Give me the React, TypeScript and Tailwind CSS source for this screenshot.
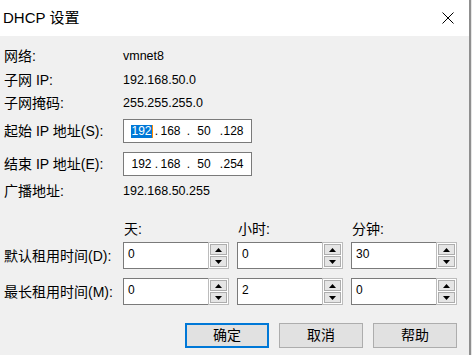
import React from "react";

const CJK = { fontFamily: '"Liberation Sans", "Noto Sans CJK SC", sans-serif' };

function Spinner() {
  return (
    <div className="w-[21px] h-full border border-[#bcbcbc] bg-white p-[1px] flex flex-col gap-[1px]">
      <div className="flex-1 border border-[#adadad] bg-[#e5e5e5] flex items-center justify-center">
        <svg width="7" height="4" viewBox="0 0 7 4"><path d="M3.5 0 L7 4 L0 4 Z" fill="#000" /></svg>
      </div>
      <div className="flex-1 border border-[#adadad] bg-[#e5e5e5] flex items-center justify-center">
        <svg width="7" height="4" viewBox="0 0 7 4"><path d="M0 0 L7 0 L3.5 4 Z" fill="#000" /></svg>
      </div>
    </div>
  );
}

function SpinBox({ value }: { value: string }) {
  return (
    <div className="w-[106px] h-full flex">
      <div className="w-[85px] h-full bg-white border-y border-l border-[#7a7a7a] pl-[4px] pt-[3px] text-[12px] leading-[16px] text-black" style={{ fontFamily: '"Liberation Sans", sans-serif' }}>
        {value}
      </div>
      <Spinner />
    </div>
  );
}

function IpBox({ parts, selected }: { parts: string[]; selected?: boolean }) {
  return (
    <div className="w-[129px] h-[24px] bg-white border border-[#7a7a7a] flex items-center pl-[7px] text-[12px] leading-[13px] text-black" style={{ fontFamily: '"Liberation Sans", sans-serif' }}>
      <span className={"inline-block w-[21px] text-center " + (selected ? "bg-[#0078d7] text-white" : "")}>{parts[0]}</span>
      <span className={"inline-block w-[1px] h-[13px] " + (selected ? "bg-[#ff8c00]" : "")} />
      <span className="inline-block w-[7px] text-center">.</span>
      <span className="inline-block w-[21px] text-center">{parts[1]}</span>
      <span className="inline-block w-[15px] text-center">.</span>
      <span className="inline-block w-[16px] text-center">{parts[2]}</span>
      <span className="inline-block w-[11px] text-right">.</span>
      <span className="inline-block w-[21px] text-center">{parts[3]}</span>
    </div>
  );
}

function InfoRow({ label, value, className }: { label: string; value: string; className: string }) {
  return (
    <div className={"flex items-center h-[20px] " + className}>
      <div className="w-[119px] text-[14px] leading-[20px] whitespace-nowrap" style={CJK}>{label}</div>
      <div className="text-[12.5px] leading-[20px]" style={{ fontFamily: '"Liberation Sans", sans-serif' }}>{value}</div>
    </div>
  );
}

export default function App() {
  return (
    <div className="w-[472px] h-[355px] flex overflow-hidden bg-[#f0f0f0]">
      <div className="w-[469px] h-full flex flex-col text-black">
        <div className="h-[36px] bg-white flex items-center justify-between pl-[3px] pr-[15px]">
          <span className="text-[15px] leading-[20px] mt-[-1px]" style={CJK}>DHCP 设置</span>
          <svg width="12" height="12" viewBox="0 0 12 12" className="mt-[-1px]">
            <path d="M0.5 0.5 L11.5 11.5 M11.5 0.5 L0.5 11.5" stroke="#000" strokeWidth="1" />
          </svg>
        </div>
        <div className="flex-1 bg-[#f0f0f0] flex flex-col pl-[4px]">
          <InfoRow label="网络:" value="vmnet8" className="mt-[10px]" />
          <InfoRow label="子网 IP:" value="192.168.50.0" className="mt-[4px]" />
          <InfoRow label="子网掩码:" value="255.255.255.0" className="mt-[3px]" />
          <div className="flex items-center h-[24px] mt-[6px]">
            <div className="w-[119px] text-[14px] leading-[20px] whitespace-nowrap" style={CJK}>起始 IP 地址(S):</div>
            <IpBox parts={["192", "168", "50", "128"]} selected />
          </div>
          <div className="flex items-center h-[24px] mt-[9px]">
            <div className="w-[119px] text-[14px] leading-[20px] whitespace-nowrap" style={CJK}>结束 IP 地址(E):</div>
            <IpBox parts={["192", "168", "50", "254"]} />
          </div>
          <InfoRow label="广播地址:" value="192.168.50.255" className="mt-[5px]" />

          <div className="flex items-center h-[20px] mt-[18px] text-[14px] leading-[20px]" style={CJK}>
            <div className="w-[119px]" />
            <div className="flex gap-[8px]">
              <div className="w-[106px] pl-[1px]">天:</div>
              <div className="w-[106px] pl-[1px]">小时:</div>
              <div className="w-[106px] pl-[1px]">分钟:</div>
            </div>
          </div>
          <div className="flex items-center h-[27px] mt-[3px]">
            <div className="w-[119px] text-[14px] leading-[20px] whitespace-nowrap" style={CJK}>默认租用时间(D):</div>
            <div className="flex gap-[8px] h-full">
              <SpinBox value="0" />
              <SpinBox value="0" />
              <SpinBox value="30" />
            </div>
          </div>
          <div className="flex items-center h-[27px] mt-[9px]">
            <div className="w-[119px] text-[14px] leading-[20px] whitespace-nowrap" style={CJK}>最长租用时间(M):</div>
            <div className="flex gap-[8px] h-full">
              <SpinBox value="0" />
              <SpinBox value="2" />
              <SpinBox value="0" />
            </div>
          </div>
          <div className="flex justify-end gap-[10px] pr-[12px] mt-[18px] h-[25px] text-[14px]" style={CJK}>
            <button className="w-[84px] h-full bg-[#e1e1e1] border-2 border-[#0078d7] flex items-center justify-center">确定</button>
            <button className="w-[84px] h-full bg-[#e1e1e1] border border-[#adadad] flex items-center justify-center">取消</button>
            <button className="w-[84px] h-full bg-[#e1e1e1] border border-[#adadad] flex items-center justify-center">帮助</button>
          </div>
        </div>
      </div>
      <div className="w-[2px] h-full bg-[#8f8f8f]" />
      <div className="w-[1px] h-full bg-[#e6e6e6]" />
    </div>
  );
}
